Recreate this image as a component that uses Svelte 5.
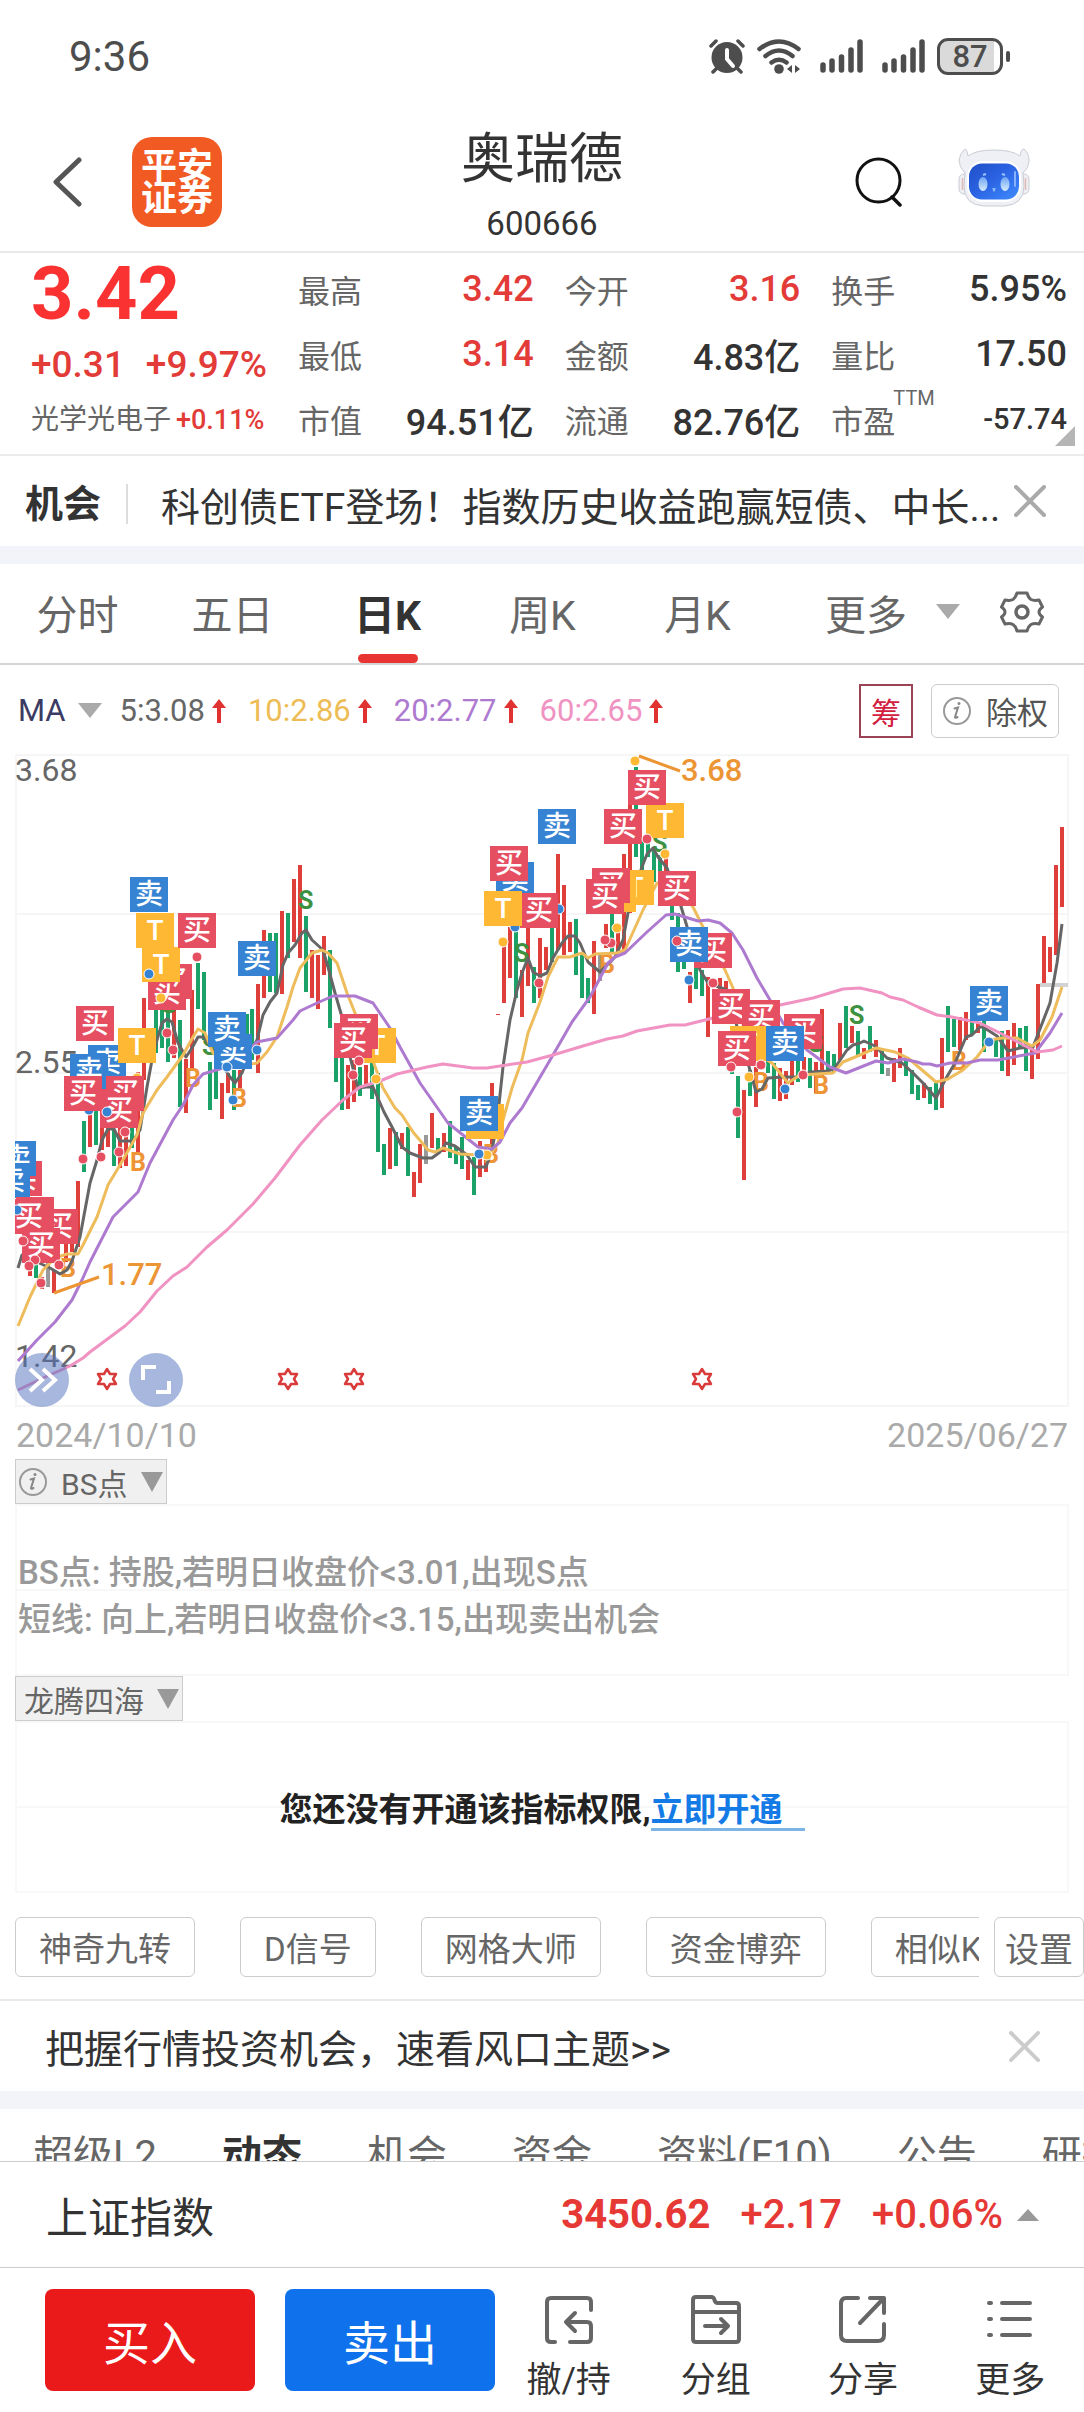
<script>
  const quotes = [
    { label: '最高', value: '3.42', up: true },
    { label: '今开', value: '3.16', up: true },
    { label: '换手', value: '5.95%' },
    { label: '最低', value: '3.14', up: true },
    { label: '金额', value: '4.83亿' },
    { label: '量比', value: '17.50' },
    { label: '市值', value: '94.51亿' },
    { label: '流通', value: '82.76亿' },
    { label: '市盈', value: '-57.74', note: 'TTM', small: true }
  ];
  const periods = ['分时', '五日', '日K', '周K', '月K'];
  const averages = [
    { text: '5:3.08', tone: 'ma5' },
    { text: '10:2.86', tone: 'ma10' },
    { text: '20:2.77', tone: 'ma20' },
    { text: '60:2.65', tone: 'ma60' }
  ];
  const tools = ['神奇九转', 'D信号', '网格大师', '资金博弈', '相似K线'];
  const sections = ['超级L2', '动态', '机会', '资金', '资料(F10)', '公告', '研报'];

  // x, high, low, colour (r up, g down, n flat)
  const candles = [
    [30,1260,1276,'r'],[36,1263,1278,'g'],[42,1277,1289,'r'],[48,1263,1287,'n'],[54,1270,1293,'r'],[66,1243,1262,'r'],
    [72,1243,1252,'r'],[78,1181,1247,'r'],[84,1121,1172,'g'],[90,1110,1147,'r'],[96,1110,1145,'g'],[102,1123,1150,'r'],
    [108,1127,1147,'r'],[114,1130,1166,'g'],[120,1128,1168,'r'],[126,1127,1166,'r'],[132,1128,1148,'g'],[138,1072,1152,'r'],
    [144,998,1080,'r'],[156,1009,1053,'g'],[162,1010,1048,'g'],[168,1010,1062,'g'],[174,1009,1058,'r'],[180,1020,1107,'g'],
    [186,1059,1113,'r'],[192,990,1068,'r'],[198,963,1009,'g'],[204,972,1040,'g'],[210,1062,1110,'g'],[216,1068,1099,'g'],
    [222,1083,1119,'r'],[228,1073,1093,'r'],[234,1070,1110,'g'],[240,1070,1088,'r'],[247,1014,1040,'g'],[252,1009,1060,'g'],
    [258,984,1073,'r'],[264,930,998,'r'],[270,933,992,'g'],[276,933,993,'g'],[282,911,994,'r'],[288,913,958,'g'],
    [294,879,942,'r'],[300,865,958,'r'],[306,916,992,'g'],[312,950,998,'r'],[318,955,1009,'r'],[324,936,975,'r'],
    [330,950,1028,'g'],[336,1057,1082,'g'],[342,1058,1110,'g'],[348,1065,1109,'r'],[354,1060,1102,'r'],[360,1067,1096,'g'],
    [366,1065,1086,'r'],[372,1060,1099,'g'],[378,1073,1152,'g'],[384,1144,1175,'g'],[390,1128,1169,'r'],[396,1132,1166,'g'],
    [402,1133,1149,'r'],[408,1127,1176,'g'],[414,1172,1197,'r'],[420,1144,1183,'r'],[426,1135,1164,'n'],[432,1113,1148,'r'],
    [438,1138,1150,'g'],[444,1133,1152,'r'],[450,1121,1158,'g'],[456,1147,1164,'g'],[462,1137,1169,'g'],[468,1160,1180,'r'],
    [474,1157,1195,'g'],[480,1141,1177,'r'],[486,1150,1172,'r'],[492,1083,1145,'r'],[498,1014,1015,'r'],[504,943,1003,'r'],
    [510,927,978,'r'],[516,928,998,'g'],[522,970,1017,'r'],[528,927,986,'r'],[534,967,1003,'g'],[540,938,998,'r'],
    [546,947,970,'r'],[552,927,962,'g'],[558,854,950,'r'],[564,885,955,'r'],[570,922,952,'r'],[576,919,975,'g'],
    [582,953,998,'g'],[588,978,1003,'g'],[594,941,1014,'r'],[600,953,981,'n'],[606,924,948,'r'],[612,913,953,'g'],
    [618,927,953,'r'],[624,854,953,'r'],[630,801,913,'r'],[636,767,857,'g'],[642,840,873,'g'],[648,837,857,'g'],
    [654,850,882,'g'],[660,855,880,'g'],[666,857,887,'r'],[672,905,920,'g'],[678,913,972,'g'],[684,960,969,'g'],
    [690,972,1003,'r'],[696,967,989,'g'],[702,970,996,'g'],[708,977,1037,'r'],[720,978,990,'r'],[726,981,990,'r'],
    [732,1070,1074,'g'],[738,1076,1138,'g'],[744,1090,1180,'r'],[750,1070,1096,'g'],[756,1067,1107,'r'],[768,1060,1073,'g'],
    [774,1063,1099,'g'],[780,1068,1101,'r'],[786,1071,1099,'r'],[792,1058,1085,'r'],[798,1060,1082,'g'],[804,1057,1075,'r'],
    [810,1058,1088,'g'],[816,1062,1093,'r'],[822,1009,1077,'r'],[828,1051,1073,'g'],[834,1054,1072,'g'],[840,1023,1060,'r'],
    [846,1006,1048,'g'],[852,1026,1043,'r'],[858,1031,1057,'g'],[864,1048,1059,'r'],[870,1026,1052,'g'],[876,1040,1057,'r'],
    [882,1051,1074,'g'],[888,1068,1076,'n'],[894,1058,1082,'r'],[900,1048,1068,'r'],[906,1057,1076,'g'],[912,1070,1094,'g'],
    [918,1085,1100,'g'],[924,1083,1098,'r'],[930,1087,1104,'g'],[936,1083,1110,'g'],[942,1038,1108,'r'],[948,1006,1052,'g'],
    [954,1019,1047,'g'],[960,1017,1050,'r'],[966,1012,1040,'r'],[972,1022,1035,'g'],[978,1022,1033,'r'],[984,1021,1052,'g'],
    [996,1038,1057,'g'],[1002,1031,1071,'g'],[1008,1030,1076,'r'],[1014,1023,1065,'r'],[1020,1028,1047,'g'],[1026,1026,1071,'g'],
    [1032,1045,1079,'r'],[1038,984,1059,'r'],[1044,936,983,'r'],[1050,947,972,'r'],[1056,865,955,'r'],[1062,827,907,'r']
  ];

  const lines = [
    ['ma5', '18,1268 22,1255 50,1268 60,1274 67,1270 72,1261 80,1237 85,1210 90,1183 97,1160 102,1140 108,1129 114,1129 120,1141 133,1141 140,1130 147,1087 152,1060 157,1040 162,1023 167,1019 172,1022 178,1043 186,1057 192,1048 198,1037 204,1037 217,1057 230,1077 235,1083 242,1073 250,1053 257,1040 263,1015 270,1002 277,993 283,965 288,953 295,945 302,933 306,930 312,940 323,950 328,967 335,993 342,1017 350,1057 358,1088 366,1087 373,1087 384,1112 392,1127 402,1147 410,1153 423,1158 432,1158 440,1152 446,1143 455,1146 467,1155 475,1167 486,1167 492,1150 497,1123 503,1067 510,1020 517,990 522,973 528,958 533,972 540,976 547,973 553,958 562,943 568,936 575,936 580,943 588,962 600,972 607,965 615,957 623,940 628,913 635,887 642,867 647,854 653,848 658,857 667,868 680,903 688,930 700,970 708,983 727,990 736,1023 748,1063 756,1092 762,1089 768,1078 783,1077 800,1077 810,1072 827,1071 834,1069 847,1050 853,1045 860,1043 864,1041 875,1046 887,1058 902,1063 913,1073 923,1083 936,1098 945,1080 955,1063 966,1037 972,1035 980,1027 983,1027 997,1036 1008,1051 1020,1048 1033,1047 1050,1003 1057,963 1062,924'],
    ['ma10', '18,1326 30,1297 43,1270 55,1258 67,1254 78,1254 83,1245 97,1217 108,1185 120,1165 137,1135 143,1113 157,1090 167,1077 183,1055 193,1037 198,1029 205,1033 213,1053 233,1067 257,1063 267,1052 277,1037 287,1007 293,987 300,968 312,953 322,950 328,953 337,963 347,993 355,1013 370,1053 383,1088 395,1108 402,1115 413,1132 428,1150 435,1152 443,1148 460,1154 480,1155 490,1155 498,1143 503,1120 512,1088 522,1060 528,1033 540,1002 548,977 558,957 570,957 582,953 588,958 595,954 617,953 625,950 643,910 657,883 673,883 693,907 702,925 713,947 725,970 733,988 750,1050 772,1063 788,1083 800,1075 833,1073 843,1062 860,1055 876,1048 895,1052 908,1058 922,1070 936,1082 948,1079 963,1070 977,1057 990,1040 1002,1038 1017,1038 1032,1046 1040,1040 1052,1017 1062,987'],
    ['ma20', '18,1361 37,1340 55,1322 72,1300 82,1280 90,1262 113,1217 138,1192 150,1163 173,1120 183,1105 193,1085 203,1074 223,1068 240,1057 257,1042 277,1038 293,1020 300,1011 317,1003 333,996 355,996 373,1003 390,1028 400,1047 420,1083 448,1123 478,1147 492,1149 500,1142 510,1123 522,1108 553,1055 572,1022 590,997 608,963 615,957 625,953 647,932 666,915 675,914 698,921 708,920 720,923 732,933 743,950 757,978 770,1000 783,1023 807,1050 830,1067 846,1073 876,1061 888,1063 903,1059 917,1062 923,1064 930,1064 937,1066 950,1063 967,1063 980,1060 998,1060 1035,1053 1050,1033 1062,1013'],
    ['ma60', '18,1390 43,1378 70,1366 83,1358 90,1352 125,1326 140,1312 157,1291 173,1276 187,1267 207,1247 227,1230 253,1204 275,1178 300,1145 322,1120 343,1100 360,1087 380,1081 397,1074 427,1067 443,1064 473,1068 487,1068 527,1062 553,1055 583,1046 607,1039 623,1036 637,1031 670,1025 685,1025 713,1018 780,1005 813,998 843,989 860,988 882,993 890,997 903,1000 918,1007 937,1015 952,1017 980,1023 1010,1038 1037,1052 1053,1050 1062,1046']
  ];

  const letters = [
    [60,1277,'B'],[130,1171,'B'],[161,1013,'S'],[185,1087,'B'],[202,1055,'S'],[231,1107,'B'],[298,909,'S'],[483,1163,'B'],[514,962,'S'],
    [599,973,'B'],[652,852,'S'],[753,1091,'B'],[808,1052,'S'],[813,1094,'B'],[849,1024,'S'],[951,1070,'B']
  ];

  // trade markers, back to front: left, top, text
  const badges = [
    [4,1161,'买'],[-2,1141,'卖'],[-8,1163,'卖'],[40,1209,'买'],[16,1197,'买'],[10,1199,'买'],[22,1228,'买'],
    [76,1006,'买'],[83,1062,'买'],[88,1045,'卖'],[70,1054,'卖'],[64,1076,'买'],[106,1076,'买'],[100,1093,'买'],[118,1028,'T'],
    [130,877,'卖'],[136,913,'T'],[154,964,'买'],[148,975,'买'],[142,947,'T'],[178,913,'买'],[238,941,'卖'],[214,1034,'卖'],[208,1012,'卖'],
    [358,1028,'T'],[340,1014,'买'],[334,1023,'买'],[466,1104,'T'],[460,1096,'卖'],
    [496,862,'卖'],[490,846,'买'],[520,893,'买'],[484,891,'T'],[538,809,'卖'],
    [646,803,'T'],[628,770,'买'],[604,809,'买'],[616,870,'T'],[598,877,'T'],[592,868,'买'],[586,879,'买'],
    [658,871,'买'],[694,933,'买'],[670,927,'卖'],[712,989,'买'],[742,1000,'买'],[730,1026,'T'],[718,1031,'买'],
    [784,1014,'买'],[766,1026,'卖'],[970,986,'卖']
  ];
  const badgeTone = { 买: 'buy', 卖: 'sell', T: 'both' };

  const dots = [
    [17,1210,'sell'],[23,1241,'buy'],[35,1260,'buy'],[29,1266,'buy'],[41,1283,'buy'],[59,1265,'buy'],[83,1159,'buy'],[101,1157,'buy'],
    [107,1112,'sell'],[125,1132,'buy'],[119,1152,'buy'],[149,974,'sell'],[161,998,'both'],[167,1033,'buy'],[173,1050,'buy'],[197,957,'buy'],
    [227,1067,'sell'],[233,1100,'sell'],[257,1050,'sell'],[359,1061,'buy'],[353,1075,'buy'],[376,1079,'both'],
    [487,1155,'both'],[479,1154,'sell'],[503,942,'both'],[539,983,'buy'],[635,761,'both'],[647,839,'buy'],[665,854,'both'],
    [617,928,'both'],[611,943,'buy'],[605,940,'buy'],[677,941,'buy'],[689,980,'sell'],[713,983,'buy'],
    [731,1067,'buy'],[737,1112,'buy'],[749,1077,'both'],[761,1065,'buy'],[785,1089,'sell'],[803,1075,'buy'],[989,1042,'sell']
  ];
  const backDots = [[89,1110,'sell'],[137,1078,'both'],[515,927,'sell'],[559,909,'sell']];
  const stars = [107, 288, 354, 702];
</script>

{#snippet info()}
  <svg class="info" viewBox="0 0 30 30" aria-hidden="true">
    <circle cx="15" cy="15" r="13" fill="none" stroke="#999" stroke-width="2" />
    <path d="M12.5 12.5l3.5-1-3 9.500q-.3 1.500 2.500 0" fill="none" stroke="#888" stroke-width="2" stroke-linecap="round" />
    <circle cx="17" cy="7.500" r="1.500" fill="#888" />
  </svg>
{/snippet}

{#snippet signal()}
  <svg class="signal" viewBox="0 0 43 34" aria-hidden="true">
    <path d="M3 26v5M12 22v9M21.500 18v13M31 11v20M40 3v28" stroke="#4d4d4d" stroke-width="5.500" stroke-linecap="round" />
  </svg>
{/snippet}

{#snippet cross()}
  <svg viewBox="0 0 32 32" aria-hidden="true"><path d="M2 2l28 28M30 2L2 30" stroke="currentColor" stroke-width="4" stroke-linecap="round" /></svg>
{/snippet}

<div class="screen">
  <div class="status">
    <span class="clock">9:36</span>
    <svg class="alarm" viewBox="0 0 36 35" aria-hidden="true">
      <g stroke="#4d4d4d" stroke-width="3.500" stroke-linecap="round">
        <path d="M2 7l5-5M29 2l5 5M8 29l-4 4M28 29l4 4" />
      </g>
      <circle cx="18" cy="18.500" r="15.500" fill="#4d4d4d" />
      <path d="M18 11v9l6 7" fill="none" stroke="#fff" stroke-width="4" stroke-linecap="round" />
    </svg>
    <svg class="wifi" viewBox="0 0 44 35" aria-hidden="true">
      <g fill="none" stroke="#4d4d4d" stroke-width="4.500" stroke-linecap="round">
        <path d="M2.500 10Q22-5 41.500 10M8.500 17Q22 6 35.500 17M14.500 23.500Q22 18 29.500 23.500" />
      </g>
      <circle cx="22" cy="30" r="4.800" fill="#4d4d4d" />
      <path d="M30 30l5-4v8zM43 30l-5-4v8z" fill="#4d4d4d" />
    </svg>
    {@render signal()}
    {@render signal()}
    <span class="battery"><span>87</span></span>
  </div>

  <header>
    <button class="back" aria-label="返回">
      <svg viewBox="0 0 30 50" aria-hidden="true"><path d="M27 3L4 25l23 22" fill="none" stroke="#555" stroke-width="5" stroke-linecap="round" stroke-linejoin="round" /></svg>
    </button>
    <a class="logo" href="#home">平安证券</a>
    <div class="title">
      <h1>奥瑞德</h1>
      <span>600666</span>
    </div>
    <button class="search" aria-label="搜索">
      <svg viewBox="0 0 48 50" aria-hidden="true"><circle cx="23.500" cy="23.500" r="21.500" fill="none" stroke="#111" stroke-width="3" /><path d="M37 40l8 8" stroke="#111" stroke-width="3.500" stroke-linecap="round" /></svg>
    </button>
    <button class="robot" aria-label="智能助手">
      <svg viewBox="0 0 72 60" aria-hidden="true">
        <defs>
          <linearGradient id="visor" x1="0" y1="0" x2="1" y2="1"><stop offset="0" stop-color="#1f4fc4" /><stop offset=".45" stop-color="#2b62e2" /><stop offset="1" stop-color="#3f8cff" /></linearGradient>
          <linearGradient id="eye" x1="0" y1="0" x2="0" y2="1"><stop offset="0" stop-color="#6fa4f2" /><stop offset="1" stop-color="#d6ecff" /></linearGradient>
        </defs>
        <g fill="#eef0f5" stroke="#c9ccd3" stroke-width="1">
          <rect x="1" y="26" width="10" height="20" rx="5" />
          <rect x="61" y="26" width="10" height="20" rx="5" />
          <path d="M7 1Q9 1 10 8Q18 2 36 2Q54 2 62 8Q63 1 66 1Q71 5 71 13Q71 20 65 25L66 38Q66 57 46 58H26Q6 57 6 38L7 25Q1 19 1 12Q2 5 7 1Z" />
        </g>
        <path d="M4.500 30v12M67.500 30v12" stroke="#e3b9b4" stroke-width="1.500" />
        <rect x="9" y="13" width="54" height="41" rx="16" fill="#fff" />
        <rect x="11" y="15.500" width="50" height="36" rx="13" fill="url(#visor)" />
        <g fill="url(#eye)"><ellipse cx="25" cy="36" rx="4.500" ry="7" /><ellipse cx="47" cy="36" rx="4.500" ry="7" /><path d="M34 40h4l-2 4z" /></g>
        <path d="M25 27l3-1M44 26l3 1" stroke="#9cc4ff" stroke-width="2" />
        <path d="M57 24v14" stroke="#86b2ff" stroke-width="2" stroke-linecap="round" />
      </svg>
    </button>
  </header>

  <section class="quote">
    <div class="now">
      <strong>3.42</strong>
      <div class="change"><span>+0.31</span><span>+9.97%</span></div>
      <div class="sector">光学光电子 <em>+0.11%</em></div>
    </div>
    <dl>
      {#each quotes as q}
        <div>
          <dt>{q.label}{#if q.note}<sup>{q.note}</sup>{/if}</dt>
          <dd class:up={q.up} class:small={q.small}>{q.value}</dd>
        </div>
      {/each}
    </dl>
    <i class="corner"></i>
  </section>

  <section class="notice">
    <b>机会</b>
    <a href="#notice">科创债ETF登场！指数历史收益跑赢短债、中长...</a>
    <button aria-label="关闭">{@render cross()}</button>
  </section>

  <nav class="periods">
    {#each periods as p}
      <button class:active={p === '日K'}>{p}</button>
    {/each}
    <div class="more">
      <button>更多<i class="down"></i></button>
      <button class="gear" aria-label="设置">
        <svg viewBox="0 0 44 44" aria-hidden="true">
          <path d="M17 3h10q1.500 5 4 6.500q3 1.500 8 .5l3.500 7q-3.500 2.500-3.500 5t3.500 5l-3.500 7q-5-1-8 .5q-2.500 1.500-4 6.500h-10q-1.500-5-4-6.500q-3-1.500-8-.5l-3.500-7q3.500-2.500 3.500-5t-3.500-5l3.500-7q5 1 8-.5q2.500-1.500 4-6.500z" fill="none" stroke="#666" stroke-width="3" stroke-linejoin="round" />
          <circle cx="22" cy="22" r="6" fill="none" stroke="#666" stroke-width="3.500" />
        </svg>
      </button>
    </div>
  </nav>

  <div class="averages">
    <button class="ma">MA<i class="down"></i></button>
    {#each averages as a}
      <span class={a.tone}>{a.text}<svg viewBox="0 0 14 24" aria-hidden="true"><path d="M7 0l7 9H9v15H5V9H0z" fill="#e03230" /></svg></span>
    {/each}
    <button class="chips-dist">筹</button>
    <button class="adjust">{@render info()}除权</button>
  </div>

  <div class="chart">
    <svg viewBox="0 749 1084 663" role="img" aria-label="日K线图">
      <defs><clipPath id="plot"><rect x="15" y="749" width="1054" height="658" /></clipPath></defs>
      <g class="grid">
        <rect x="16" y="755" width="1052" height="651" />
        <path d="M16 914H1068M16 1073H1068M16 1232H1068" />
      </g>
      <g class="axis">
        <text x="15" y="781">3.68</text>
        <text x="15" y="1073">2.55</text>
        <text x="15" y="1367">1.42</text>
      </g>
      <g clip-path="url(#plot)">
        {#each candles as [x, top, bottom, tone]}
          <line class="candle {tone}" x1={x} x2={x} y1={top} y2={bottom} />
        {/each}
        <path d="M1040 985H1068" stroke="#d2d2d2" stroke-width="4" />
        {#each letters as [x, y, t]}
          <text class="letter {t}" {x} {y}>{t}</text>
        {/each}
        {#each lines as [tone, points]}
          <polyline class="line {tone}" {points} />
        {/each}
        {#each backDots as [x, y, tone]}
          <circle class="dot {tone}" cx={x} cy={y} r="5" />
        {/each}
        {#each badges as [x, y, t]}
          <rect class={badgeTone[t]} {x} {y} width="38" height="35" />
          <text class="badge" x={x + 19} y={y + 27}>{t}</text>
        {/each}
        {#each dots as [x, y, tone]}
          <circle class="dot {tone}" cx={x} cy={y} r="5" />
        {/each}
      </g>
      <path d="M54 1293L99 1277M639 756L680 771" stroke="#ec9535" stroke-width="3" />
      <g class="extreme">
        <text x="101" y="1285">1.77</text>
        <text x="681" y="781">3.68</text>
      </g>
      {#each stars as x}
        <path d="M0-10L3-5H9L6 0L9 5H3L0 10L-3 5H-9L-6 0L-9-5H-3Z" transform="translate({x} 1379)" fill="none" stroke="#d93a3a" stroke-width="2.500" stroke-linejoin="round" />
      {/each}
    </svg>
    <div class="floating">
      <button aria-label="展开"><svg viewBox="0 0 54 54" aria-hidden="true"><path d="M15 16l12 11-12 11M28 16l12 11-12 11" fill="none" stroke="#fff" stroke-width="4" /></svg></button>
      <button aria-label="全屏"><svg viewBox="0 0 54 54" aria-hidden="true"><path d="M14 27V14h13M40 28v11H27" fill="none" stroke="#fff" stroke-width="4" /></svg></button>
    </div>
  </div>
  <div class="dates"><span>2024/10/10</span><span>2025/06/27</span></div>

  <section class="indicator">
    <button class="picker bs">{@render info()}BS点<i class="down"></i></button>
    <div class="panel lines">
      <p>BS点: 持股,若明日收盘价&lt;3.01,出现S点</p>
      <p>短线: 向上,若明日收盘价&lt;3.15,出现卖出机会</p>
    </div>
    <button class="picker">龙腾四海<i class="down"></i></button>
    <div class="panel locked">
      <p>您还没有开通该指标权限,<a href="#open">立即开通</a></p>
    </div>
  </section>

  <div class="tools">
    <div class="strip">
      {#each tools as t}<button>{t}</button>{/each}
    </div>
    <button class="config">设置</button>
  </div>

  <section class="promo">
    <a href="#topics">把握行情投资机会，速看风口主题&gt;&gt;</a>
    <button aria-label="关闭">{@render cross()}</button>
  </section>

  <nav class="sections">
    {#each sections as s}<a href="#section" class:active={s === '动态'}>{s}</a>{/each}
  </nav>

  <div class="index">
    <span class="name">上证指数</span>
    <b>3450.62</b><span>+2.17</span><span>+0.06%</span>
    <i></i>
  </div>

  <footer>
    <button class="trade in">买入</button>
    <button class="trade out">卖出</button>
    <div class="actions">
      <button>
        <svg viewBox="0 0 50 50" aria-hidden="true"><path d="M11 47H7q-4 0-4-4V7q0-4 4-4h36q4 0 4 4v8M26 47h17q4 0 4-4V31q0-4-4-4H22M31 18l-9 9 9 9" /></svg>撤/持
      </button>
      <button>
        <svg viewBox="0 0 50 50" aria-hidden="true"><path d="M2 5q0-3 3-3h15q3 0 3.500 3t3.500 3h18q3 0 3 3v33q0 3-3 3H5q-3 0-3-3zM2 17h46M14 31h23M30 24l7 7-7 7" /></svg>分组
      </button>
      <button>
        <svg viewBox="0 0 50 50" aria-hidden="true"><path d="M20 3H8Q3 3 3 9v31q0 6 6 6h31q6 0 6-6V29M32 3h14v15M45 4L22 28" /></svg>分享
      </button>
      <button>
        <svg viewBox="0 0 50 50" aria-hidden="true"><path d="M4 8h2M17 8h28M4 24h2M17 24h28M4 40h2M17 40h28" /></svg>更多
      </button>
    </div>
  </footer>
</div>

<style>
  :global(body) { background: #fff; }
  .screen { font-family: Roboto, "Noto Sans CJK SC", sans-serif; color: #333; background: #fff; overflow: hidden; }
  button { font: inherit; color: inherit; background: none; border: 0; padding: 0; margin: 0; }
  a { color: inherit; text-decoration: none; }
  svg { display: block; flex: none; }
  h1, p, dl, dd { margin: 0; }

  .status { display: flex; align-items: center; height: 112px; padding: 0 81px 0 69px; color: #4d4d4d; }
  .clock { font-size: 42px; margin-right: auto; }
  .alarm { width: 36px; height: 35px; margin-right: 12px; }
  .wifi { width: 44px; height: 35px; margin-right: 19px; }
  .signal { width: 43px; height: 34px; margin-right: 19px; }
  .signal + .signal { margin-right: 12px; }
  .battery { position: relative; width: 66px; height: 37px; box-sizing: border-box; border: 3px solid #4d4d4d; border-radius: 11px; background: linear-gradient(90deg, #dadada 54px, #fff 54px); display: flex; align-items: center; justify-content: center; font-size: 31px; font-weight: 500; }
  .battery::after { content: ""; position: absolute; right: -10px; top: 10px; width: 4px; height: 11px; border-radius: 2px; background: #4d4d4d; }

  header { position: relative; display: flex; align-items: center; height: 139px; padding: 0 54px 0 52px; border-bottom: 2px solid #e9e9e9; }
  .back svg { width: 30px; height: 50px; }
  .logo { display: block; width: 72px; height: 68px; padding: 14px 9px 8px; margin-left: 50px; margin-right: auto; border-radius: 20px; background: #f15a22; color: #fff; font-size: 36px; line-height: 32px; font-weight: 700; word-break: break-all; }
  .title { position: absolute; inset: 0; display: flex; flex-direction: column; align-items: center; padding-top: 18px; pointer-events: none; }
  h1 { font-size: 54px; line-height: 60px; font-weight: 400; }
  .title span { font-size: 33px; line-height: 40px; margin-top: 14px; }
  .search svg { width: 48px; height: 50px; }
  .search { margin-right: 55px; }
  .robot { padding-bottom: 8px; }
  .robot svg { width: 72px; height: 60px; }

  .quote { position: relative; display: flex; height: 201px; border-bottom: 2px solid #ececec; }
  .now { width: 298px; flex: none; padding-left: 31px; box-sizing: border-box; color: #e23b38; white-space: nowrap; }
  .now strong { display: block; font-size: 74px; line-height: 82px; height: 78px; color: #fa3232; }
  .change { display: flex; justify-content: space-between; width: 236px; font-size: 37px; line-height: 68px; height: 66px; font-weight: 500; }
  .sector { font-size: 28px; line-height: 46px; color: #666; }
  .sector em { font-style: normal; font-weight: 500; color: #e23b38; font-size: 27px; margin-left: -2px; }
  dl { flex: 1; display: grid; grid-template-columns: repeat(3, 1fr); column-gap: 31px; grid-auto-rows: 65px; padding: 3px 17px 0 0; }
  dl div { display: flex; justify-content: space-between; align-items: center; white-space: nowrap; }
  dt { position: relative; font-size: 32px; color: #666; }
  sup { position: absolute; left: 62px; top: -8px; font-size: 20px; line-height: 20px; }
  dd { font-size: 36px; font-weight: 500; }
  dd.small { font-size: 29px; }
  dd.up { color: #e23b38; }
  .corner { position: absolute; right: 9px; bottom: 8px; border: solid transparent; border-width: 0 0 20px 20px; border-bottom-color: #b5b5b5; }

  .notice { display: flex; align-items: center; height: 90px; padding: 0 38px 0 25px; border-bottom: 18px solid #f3f4f9; }
  .notice b { font-size: 38px; padding-right: 25px; margin-right: 33px; margin-top: 5px; line-height: 40px; border-right: 2px solid #ddd; }
  .notice a { flex: 1; min-width: 0; font-size: 39px; white-space: nowrap; margin-top: 5px; }
  .notice button { color: #aaa; }
  .notice button svg { width: 32px; height: 32px; }

  .periods { display: grid; grid-template-columns: repeat(5, 155fr) 309fr; height: 99px; border-bottom: 2px solid #d3d5d5; font-size: 41px; color: #666; }
  .periods button { padding-bottom: 4px; }
  .periods .active { position: relative; font-weight: 700; color: #333; }
  .periods .active::after { content: ""; position: absolute; left: calc(50% - 30px); bottom: 0; width: 60px; height: 9px; border-radius: 5px; background: #e93434; }
  .more { display: flex; justify-content: space-between; align-items: center; padding: 0 40px 0 50px; }
  .more button { display: flex; align-items: center; }
  .more .down { margin-left: 29px; }
  .gear svg { width: 44px; height: 44px; }
  .down { border: solid transparent; border-width: 15px 12px 0; border-top-color: #aaa; }

  .averages { display: flex; align-items: center; height: 77px; padding: 7px 25px 0 18px; font-size: 31px; }
  .averages span { display: flex; align-items: center; gap: 7px; margin-right: 22px; }
  .averages svg { width: 14px; height: 24px; }
  .ma { display: flex; align-items: center; gap: 12px; margin-right: 18px; color: #3c3b63; }
  span.ma5 { color: #666; }
  span.ma10 { color: #eebc55; }
  span.ma20 { color: #ad7ad0; }
  span.ma60 { color: #f092c2; }
  .chips-dist { width: 54px; height: 54px; margin-left: auto; border: 2px solid #9a4456; color: #d3203f; font-size: 30px; }
  .averages .adjust { display: flex; align-items: center; justify-content: center; gap: 14px; width: 128px; height: 54px; margin-left: 18px; border: 1px solid #ccc; border-radius: 6px; color: #555; }
  .averages .info, .info { width: 30px; height: 30px; }

  .chart { position: relative; }
  .chart > svg { width: 100%; height: auto; }
  .grid { fill: none; stroke: #f6f6f6; stroke-width: 2; }
  .axis text { font-size: 32px; fill: #666; }
  .candle { stroke-width: 4; }
  .r { stroke: #de3f3b; }
  .g { stroke: #1aa269; }
  .n { stroke: #999; }
  .line { fill: none; stroke-width: 3; stroke-linejoin: round; }
  polyline.ma5 { stroke: #666; }
  polyline.ma10 { stroke: #eebc5b; }
  polyline.ma20 { stroke: #ad7ad0; }
  polyline.ma60 { stroke: #f092c2; }
  .letter { font-size: 25px; font-weight: 700; }
  .B { fill: #ee9436; }
  .S { fill: #3d9140; }
  .buy { fill: #e64e62; }
  .sell { fill: #3583d2; }
  .both { fill: #ffb834; }
  .badge { font-size: 28px; fill: #fff; text-anchor: middle; font-weight: 500; }
  .dot { stroke: #fff; stroke-width: 1; }
  .extreme text { font-size: 31px; font-weight: 500; fill: #ec9535; }
  .floating { position: absolute; left: 15px; bottom: 5px; display: flex; gap: 60px; }
  .floating button { width: 54px; height: 54px; border-radius: 50%; background: rgba(82, 112, 190, .5); }

  .dates { display: flex; justify-content: space-between; padding: 0 16px; font-size: 34px; line-height: 47px; color: #aaa; }
  .indicator { padding: 0 15px; }
  .picker { display: flex; align-items: center; height: 45px; padding: 0 3px 0 8px; border: 1px solid #ccc; background: #f0f0f0; color: #666; font-size: 30px; }
  .picker .down { margin-left: 13px; border-width: 20px 11px 0; border-top-color: #999; }
  .bs { padding-left: 2px; gap: 13px; }
  .bs .down { margin-left: 0; }
  .panel { height: 172px; box-sizing: border-box; border: 2px solid #f8f8f8; background: linear-gradient(#f8f8f8, #f8f8f8) 0 50% / 100% 2px no-repeat; }
  .lines { padding: 43px 1px 0; color: #999; font-size: 33px; line-height: 47px; font-weight: 500; }
  .locked { display: flex; align-items: center; justify-content: center; font-size: 33px; font-weight: 700; color: #222; }
  .locked a { color: #147be6; padding-right: 22px; border-bottom: 3px solid #7db4e6; display: inline-block; line-height: 36px; }

  .tools { display: flex; gap: 15px; padding: 24px 0 22px 15px; border-bottom: 2px solid #eaeaea; font-size: 33px; color: #666; }
  .strip { flex: 1; min-width: 0; display: flex; gap: 45px; overflow: hidden; }
  .tools button { flex: none; height: 60px; padding: 0 23px; border: 1px solid #ccc; border-radius: 6px; white-space: nowrap; }
  .tools .config { width: 90px; padding: 0; font-size: 34px; }

  .promo { display: flex; justify-content: space-between; align-items: center; height: 90px; padding: 0 44px 0 45px; border-bottom: 18px solid #f3f4f9; font-size: 39px; }
  .promo button { color: #ccc; }
  .promo button svg { width: 31px; height: 31px; }

  .sections { display: flex; gap: 65px; height: 52px; padding-left: 33px; overflow: hidden; font-size: 40px; line-height: 94px; color: #666; white-space: nowrap; }
  .sections .active { font-weight: 700; color: #333; }

  .index { display: flex; align-items: center; height: 105px; padding: 0 45px 0 46px; border: solid #ccc; border-width: 1px 0; color: #e63835; font-size: 40px; font-weight: 500; }
  .index .name { margin-right: auto; margin-left: 0; color: #333; font-size: 42px; font-weight: 400; }
  .index b { font-size: 40px; font-weight: 700; }
  .index span { margin-left: 30px; }
  .index i { margin-left: 14px; border: solid transparent; border-width: 0 11px 12px; border-bottom-color: #999; }

  footer { display: flex; align-items: center; height: 144px; padding-left: 45px; }
  .trade { width: 210px; height: 102px; margin-right: 30px; margin-bottom: 1px; border-radius: 8px; color: #fff; font-size: 47px; }
  .in { background: #ea1a1b; }
  .out { background: #0f72ec; margin-right: 0; }
  .actions { flex: 1; display: grid; grid-template-columns: repeat(4, 1fr); padding-top: 18px; }
  .actions button { display: flex; flex-direction: column; align-items: center; font-size: 35px; line-height: 44px; gap: 14px; }
  .actions svg { width: 50px; height: 50px; fill: none; stroke: #666; stroke-width: 4; stroke-linecap: round; stroke-linejoin: round; }
</style>
